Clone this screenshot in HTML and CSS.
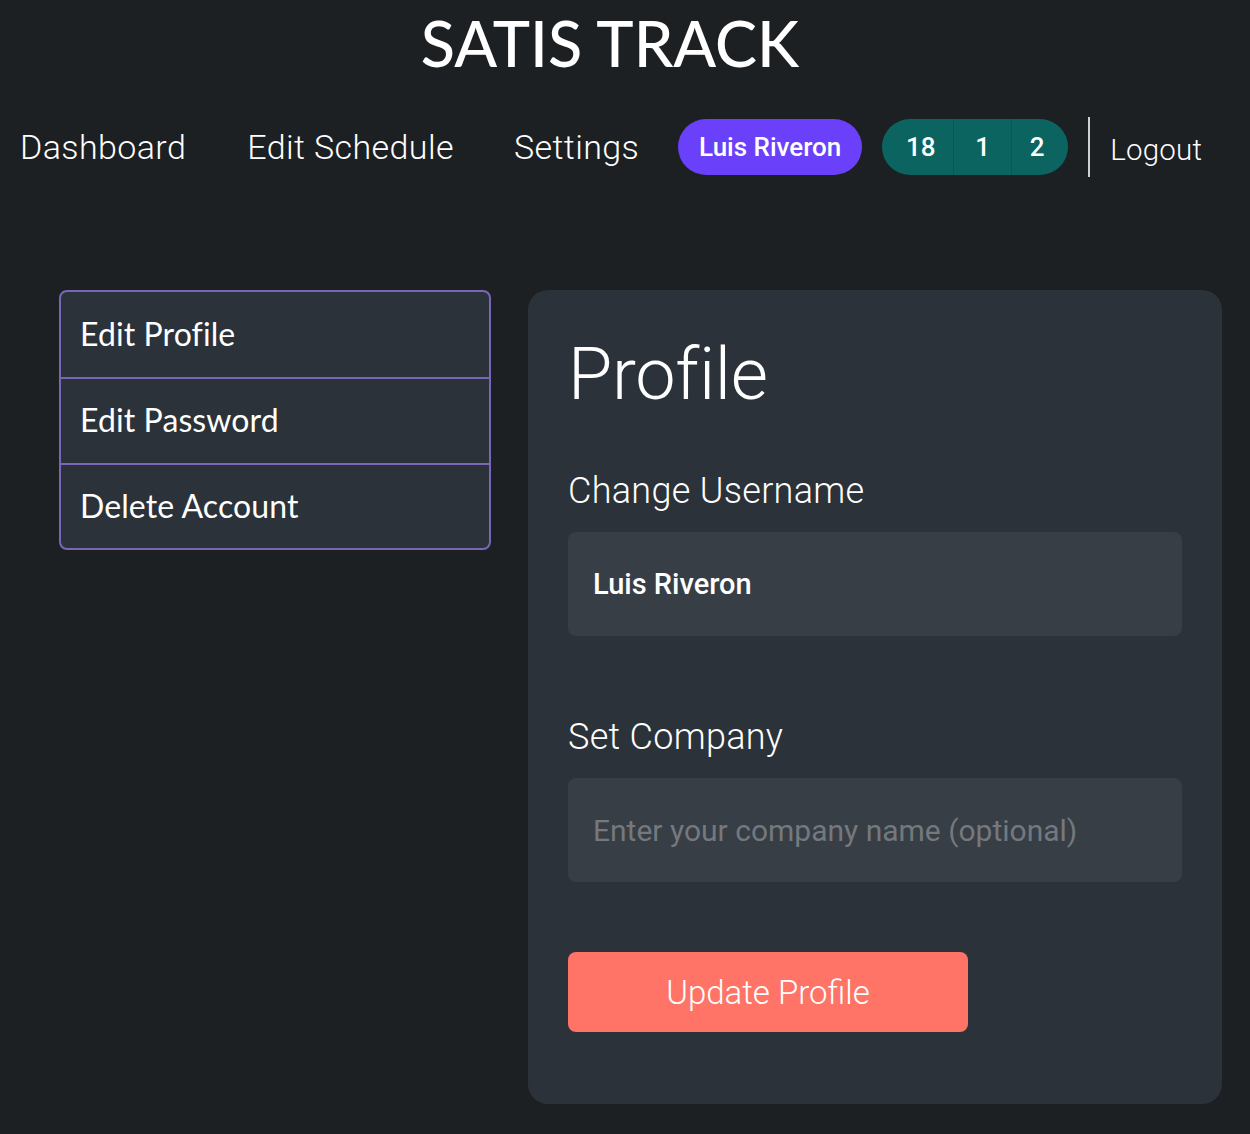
FILE: index.html
```html
<!DOCTYPE html>
<html>
<head>
<meta charset="utf-8">
<link rel="stylesheet" href="styles.css">
</head>
<body>
<header class="top">
  <h1 class="brand">SATIS TRACK</h1>
  <nav class="nav">
    <a class="nav-link nav-dash">Dashboard</a>
    <a class="nav-link nav-sched">Edit Schedule</a>
    <a class="nav-link nav-set">Settings</a>
    <span class="user-pill">Luis Riveron</span>
    <span class="counts">
      <span class="count">18</span>
      <span class="count">1</span>
      <span class="count">2</span>
    </span>
    <span class="vsep"></span>
    <a class="nav-link logout">Logout</a>
  </nav>
</header>
<main class="main">
  <ul class="side">
    <li class="side-item">Edit Profile</li>
    <li class="side-item">Edit Password</li>
    <li class="side-item">Delete Account</li>
  </ul>
  <section class="card">
    <h2 class="card-title">Profile</h2>
    <label class="field-label">Change Username</label>
    <div class="input filled">Luis Riveron</div>
    <label class="field-label second">Set Company</label>
    <div class="input placeholder">Enter your company name (optional)</div>
    <button class="btn">Update Profile</button>
  </section>
</main>
</body>
</html>
```
FILE: styles.css
```css
* { box-sizing: border-box; }
html, body { margin: 0; padding: 0; }
body {
  background: #1c2023;
  color: #ffffff;
  font-family: "Roboto", "Liberation Sans", sans-serif;
  width: 1250px;
  height: 1134px;
  overflow: hidden;
}
.top { display: flex; flex-direction: column; align-items: center; }
.brand {
  margin: 7px 0 0 0;
  font-family: "Lato", sans-serif;
  font-weight: 500;
  font-size: 63px;
  line-height: 72px;
  letter-spacing: 0px;
  text-align: center;
  padding-right: 30px;
}
.nav {
  display: flex;
  align-items: center;
  width: 100%;
  height: 62px;
  margin-top: 37px;
  padding-left: 20px;
}
.nav-link {
  font-family: "Roboto", sans-serif;
  font-weight: 300;
  font-size: 34px;
  color: #fff;
  letter-spacing: 0.4px;
}
.nav-dash { margin-right: 61px; }
.nav-sched { margin-right: 60px; }
.nav-set { margin-right: 39px; }
.user-pill {
  background: #6b40fb;
  height: 56px;
  width: 184px;
  border-radius: 28px;
  display: flex;
  align-items: center;
  justify-content: center;
  font-weight: 500;
  font-size: 26px;
  letter-spacing: 0;
}
.counts {
  display: flex;
  margin-left: 20px;
  height: 56px;
  width: 186px;
  border-radius: 28px;
  background: #0b6460;
  overflow: hidden;
}
.count {
  display: flex;
  align-items: center;
  justify-content: center;
  font-weight: 500;
  font-size: 26px;
  border-left: 1px solid #0a5754;
}
.count:nth-child(1) { width: 71px; border-left: none; padding-left: 6px; }
.count:nth-child(2) { width: 58px; }
.count:nth-child(3) { width: 57px; padding-right: 6px; }
.vsep {
  width: 2px;
  height: 60px;
  background: #d0d0d0;
  margin-left: 20px;
  margin-right: 20px;
}
.logout { padding-top: 6px; font-size: 29.5px; letter-spacing: 0.2px; }

.main {
  display: flex;
  align-items: flex-start;
  padding-left: 59px;
  margin-top: 112px;
}
.side {
  list-style: none;
  margin: 0;
  padding: 0;
  width: 432px;
  border: 2px solid #7a66b6;
  border-radius: 8px;
  background: #2c3239;
  overflow: hidden;
}
.side-item {
  height: 86px;
  display: flex;
  align-items: center;
  padding-left: 19px;
  padding-bottom: 3px;
  font-family: "Lato", sans-serif;
  font-size: 32px;
  font-weight: 400;
  letter-spacing: 0.1px;
  border-top: 2px solid #7a66b6;
}
.side-item:first-child { border-top: none; height: 85px; }
.side-item:last-child { height: 85px; }
.card {
  margin-left: 37px;
  width: 694px;
  height: 814px;
  background: #2c3239;
  border-radius: 20px;
  padding: 40px 40px 0 40px;
}
.card-title {
  margin: 0;
  font-family: "Roboto", sans-serif;
  font-weight: 300;
  font-size: 72px;
  line-height: 90px;
  letter-spacing: -0.3px;
}
.field-label {
  display: block;
  font-family: "Roboto", sans-serif;
  font-weight: 300;
  font-size: 36px;
  line-height: 44px;
  letter-spacing: 0.3px;
  margin-top: 49px;
}
.field-label.second { margin-top: 79px; }
.input {
  margin-top: 19px;
  height: 104px;
  width: 614px;
  border-radius: 8px;
  background: #373e46;
  display: flex;
  align-items: center;
  padding-left: 25px;
  font-size: 29px;
}
.filled { font-weight: 500; color: #fff; }
.placeholder { color: #75787c; font-weight: 400; font-size: 30px; }
.btn {
  display: flex;
  align-items: center;
  justify-content: center;
  margin-top: 70px;
  width: 400px;
  height: 80px;
  border: none;
  border-radius: 8px;
  background: #ff7467;
  color: #fff;
  font-family: "Roboto", sans-serif;
  font-weight: 300;
  font-size: 33px;
}
```
